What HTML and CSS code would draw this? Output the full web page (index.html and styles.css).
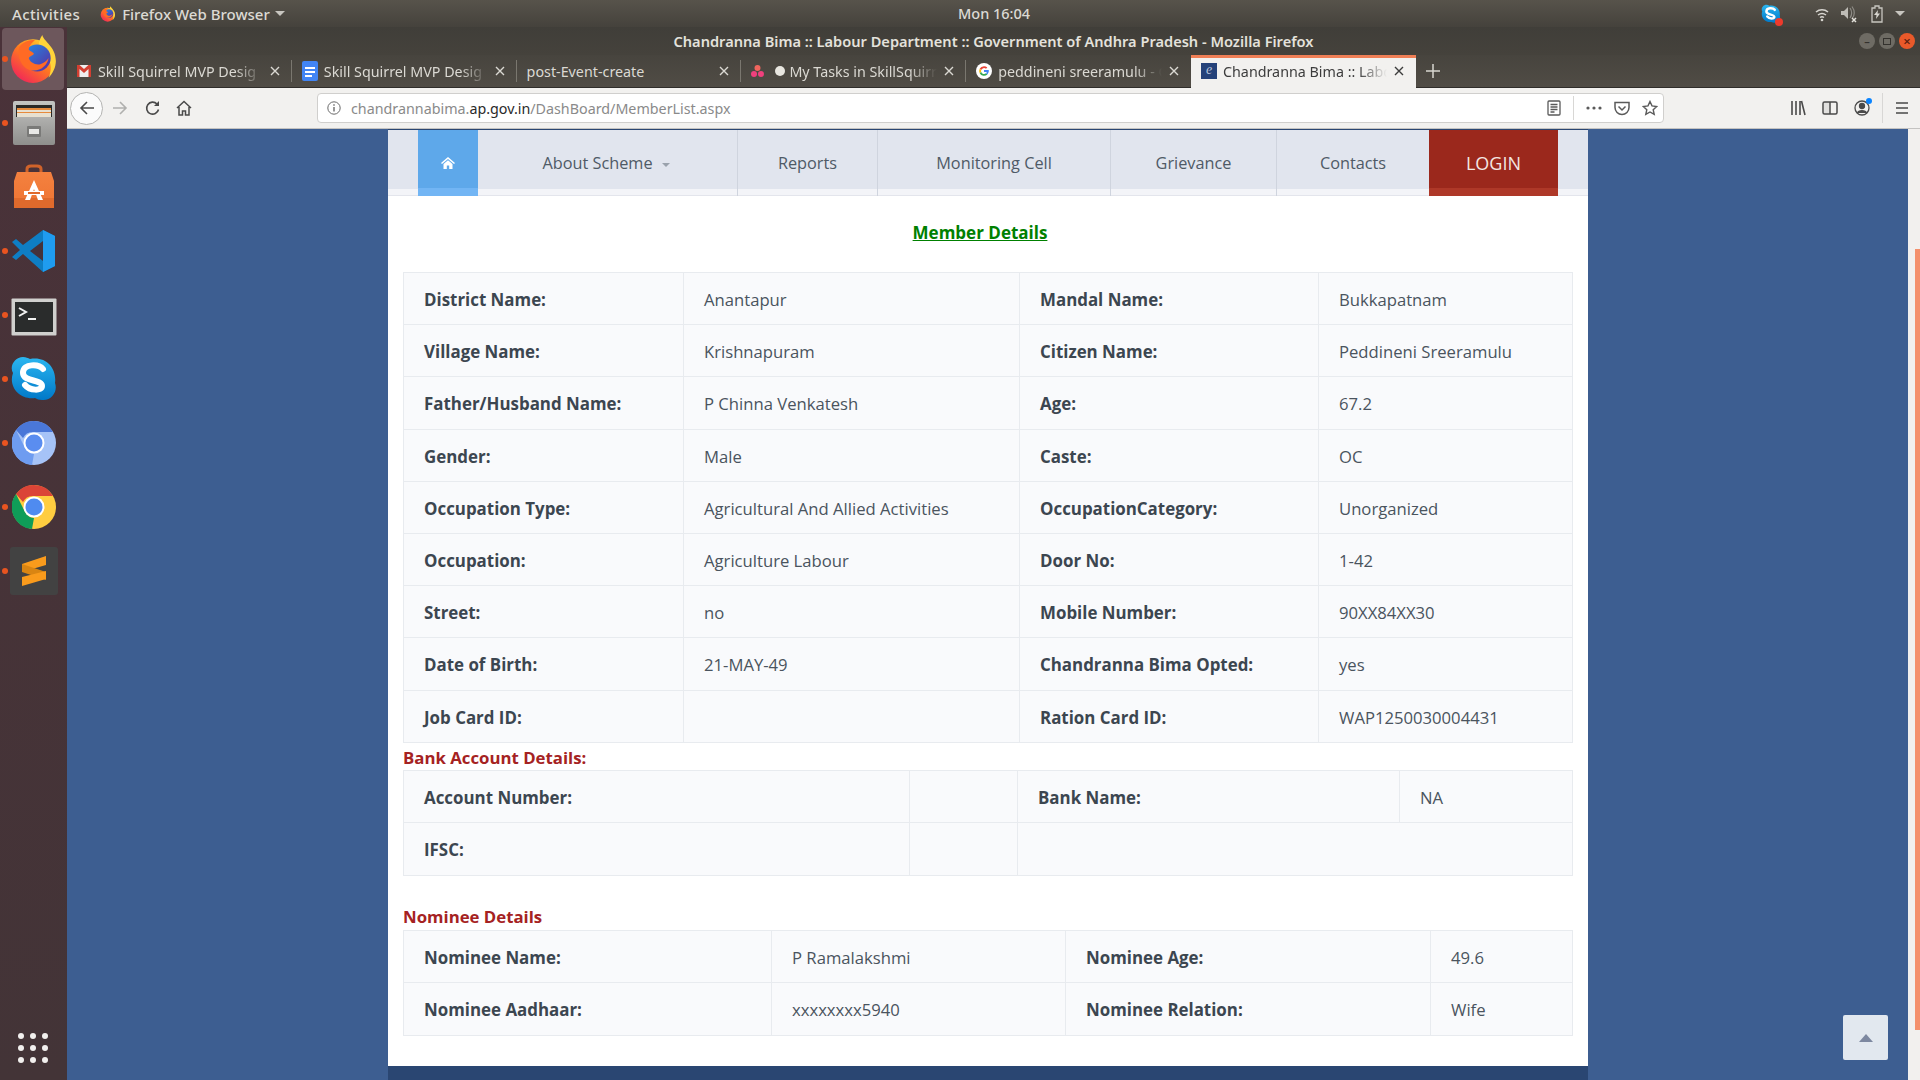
FILE: index.html
```html
<!DOCTYPE html>
<html lang="en">
<head>
    <meta charset="UTF-8">
    <title>Chandranna Bima :: Labour Department :: Government of Andhra Pradesh - Mozilla Firefox</title>
    <link rel="stylesheet" href="styles.css">
</head>
<body>
    <svg class="defs" width="0" height="0">
        <defs>
            <linearGradient id="ff-body" x1="0.8" y1="0.1" x2="0.2" y2="0.9">
                <stop offset="0" stop-color="#ffcb2e"/>
                <stop offset="0.45" stop-color="#ff7a1f"/>
                <stop offset="1" stop-color="#f22c55"/>
            </linearGradient>
            <linearGradient id="ff-ball" x1="0" y1="0" x2="1" y2="1">
                <stop offset="0" stop-color="#1f8ee6"/>
                <stop offset="1" stop-color="#5b2aa0"/>
            </linearGradient>
            <linearGradient id="skype-grad" x1="0" y1="0" x2="0" y2="1">
                <stop offset="0" stop-color="#2bb6f0"/>
                <stop offset="1" stop-color="#0078c8"/>
            </linearGradient>
            <linearGradient id="shop-grad" x1="0" y1="0" x2="0" y2="1">
                <stop offset="0" stop-color="#f4813f"/>
                <stop offset="1" stop-color="#ee7433"/>
            </linearGradient>
            <linearGradient id="drawer-grad" x1="0" y1="0" x2="0" y2="1">
                <stop offset="0" stop-color="#c4c4c2"/>
                <stop offset="1" stop-color="#8e8e8c"/>
            </linearGradient>
            <symbol id="firefox" viewBox="0 0 48 48">
                <circle cx="23" cy="26" r="21" fill="url(#ff-body)"/>
                <path d="M32 1c1 6 13 11 13 25 0 6-3 12-7 16 3-7 3-14-1-19-2-3-7-6-8-11-1-4 1-8 3-11z" fill="#ffd43a"/>
                <circle cx="27" cy="23" r="13" fill="url(#ff-ball)"/>
                <path d="M10 12c4-5 10-7 15-6-3 2-6 6-6 9 2 2 4 2 5 4-1 2-4 2-5 4 1 4 6 7 11 6 3-1 6-3 8-6-1 7-8 13-16 12C13 34 7 22 10 12z" fill="#ff6a24"/>
            </symbol>
            <symbol id="skype" viewBox="0 0 48 48">
                <path d="M13 2c3 0 5 1 7 2 16-3 27 9 25 24 3 8-3 18-13 17-3 0-5-1-7-2C10 45-2 32 3 18-1 11 5 2 13 2z" fill="url(#skype-grad)"/>
                <path d="M33 14c-4-5-20-6-20 4 0 9 19 6 19 13 0 5-12 5-17-1" fill="none" stroke="#fff" stroke-width="6" stroke-linecap="round"/>
            </symbol>
            <symbol id="close" viewBox="0 0 12 12">
                <path d="M2 2l8 8M10 2l-8 8" fill="none" stroke="currentColor" stroke-width="1.4"/>
            </symbol>
        </defs>
    </svg>

    <div class="topbar">
        <div class="topbar-left">
            <span class="activities">Activities</span>
            <svg class="topbar-ff" width="16" height="18"><use href="#firefox"/></svg>
            <span>Firefox Web Browser</span>
            <span class="caret"></span>
        </div>
        <div class="clock">Mon 16:04</div>
        <div class="tray">
            <span class="tray-skype">
                <svg width="20" height="22"><use href="#skype"/></svg>
                <span class="tray-badge"></span>
            </span>
            <svg class="tray-wifi" width="16" height="16" viewBox="0 0 16 16" fill="none" stroke="#d8d6d0" stroke-width="1.5">
                <path d="M2 6c3.5-3 8.5-3 12 0M4 9c2.5-2 5.5-2 8 0M6 11.5c1.2-.8 2.8-.8 4 0"/>
                <circle cx="8" cy="14" r="1.3" fill="#d8d6d0" stroke="none"/>
            </svg>
            <svg class="tray-vol" width="18" height="18" viewBox="0 0 18 18" fill="none">
                <path d="M1 6h3l4-4v12l-4-4H1z" fill="#bdbbb5"/>
                <path d="M10 3c2 3 2 7 0 10M12 1.5c3 4 3 9 0 12" stroke="#8e8c86" stroke-width="1.2"/>
                <path d="M12 13l4 4M16 13l-4 4" stroke="#e4e2dc" stroke-width="1.5"/>
            </svg>
            <svg class="tray-batt" width="12" height="18" viewBox="0 0 12 18">
                <path d="M4 1h4v2h3v14H1V3h3z" fill="none" stroke="#c8c6c0" stroke-width="1.3"/>
                <path d="M7 5L3 10h2.5L5 14l4-5.5H6.5z" fill="#d8d6d0"/>
            </svg>
            <span class="caret caret-tray"></span>
        </div>
    </div>

    <div class="desktop">
        <aside class="dock">
            <div class="dock-item dock-active has-dot">
                <svg width="50" height="50"><use href="#firefox"/></svg>
            </div>
            <div class="dock-item has-dot">
                <svg width="44" height="46" viewBox="0 0 44 46">
                    <rect x="1" y="1" width="42" height="44" rx="2" fill="url(#drawer-grad)"/>
                    <rect x="4" y="5" width="36" height="12" fill="#2a2826"/>
                    <rect x="5" y="8" width="34" height="9" fill="#e8e0d0"/>
                    <rect x="5" y="8" width="34" height="2" fill="#e78a3c"/>
                    <rect x="5" y="12" width="34" height="1" fill="#e78a3c"/>
                    <rect x="15" y="26" width="14" height="11" rx="1" fill="#7a7a78"/>
                    <rect x="17" y="29" width="10" height="5" fill="#e8e8e6"/>
                </svg>
            </div>
            <div class="dock-item">
                <svg width="44" height="46" viewBox="0 0 44 46">
                    <path d="M15 12V5c0-2 2-3 4-3h6c2 0 4 1 4 3v7" fill="none" stroke="#d0632a" stroke-width="3"/>
                    <path d="M5 8h34l3 9v27H2V17z" fill="url(#shop-grad)"/>
                    <rect x="2" y="34" width="40" height="10" fill="#e06a2c"/>
                    <path d="M22 16l9 20h-5l-4-11-4 11h-5z" fill="#fff"/>
                    <rect x="12" y="27" width="20" height="4" fill="#fff"/>
                    <rect x="16" y="28" width="12" height="2" fill="#e06a2c"/>
                </svg>
            </div>
            <div class="dock-item has-dot">
                <svg width="44" height="44" viewBox="0 0 44 44">
                    <path d="M31 1l12 6v30l-12 6-20-18-7 6-4-3 8-7-8-8 4-3 7 6z" fill="#0e7ec4"/>
                    <path d="M31 1l12 6v30l-12 6z" fill="#1f9cf0"/>
                    <path d="M31 12L18 22l13 10z" fill="#45323a"/>
                </svg>
            </div>
            <div class="dock-item has-dot">
                <svg class="dock-terminal" width="46" height="38" viewBox="0 0 46 38">
                    <rect x="0.5" y="0.5" width="45" height="37" rx="1" fill="#d0d0ce"/>
                    <rect x="4" y="4" width="38" height="30" fill="#2a2c2c"/>
                    <path d="M8 10l7 4-7 4" fill="none" stroke="#f2f2f2" stroke-width="2"/>
                    <rect x="17" y="20" width="8" height="2" fill="#f2f2f2"/>
                </svg>
            </div>
            <div class="dock-item has-dot">
                <svg width="48" height="48"><use href="#skype"/></svg>
            </div>
            <div class="dock-item has-dot">
                <svg width="44" height="44" viewBox="0 0 44 44">
                    <circle cx="22" cy="22" r="22" fill="#a6c3f7"/>
                    <path d="M22 0a22 22 0 0 1 19 11H22a11 11 0 0 0-11 6L4 9a22 22 0 0 1 18-9z" fill="#4a77d8"/>
                    <path d="M4 9l9 18a11 11 0 0 0 9 6l-2 11A22 22 0 0 1 4 9z" fill="#6e9cf0"/>
                    <circle cx="22" cy="22" r="10.5" fill="#fff"/>
                    <circle cx="22" cy="22" r="8.5" fill="#5a8df0"/>
                </svg>
            </div>
            <div class="dock-item has-dot">
                <svg width="44" height="44" viewBox="0 0 44 44">
                    <circle cx="22" cy="22" r="22" fill="#ffcd40"/>
                    <path d="M22 0a22 22 0 0 1 19 11H22a11 11 0 0 0-11 6L4 9a22 22 0 0 1 18-9z" fill="#db4437"/>
                    <path d="M4 9l9 18a11 11 0 0 0 9 6l-2 11A22 22 0 0 1 4 9z" fill="#0f9d58"/>
                    <circle cx="22" cy="22" r="10.5" fill="#fff"/>
                    <circle cx="22" cy="22" r="8.5" fill="#4f8bf0"/>
                </svg>
            </div>
            <div class="dock-item has-dot">
                <div class="sublime">
                    <svg width="26" height="32" viewBox="0 0 26 32">
                        <path d="M25 1v9L1 17V9z" fill="#f99b1c"/>
                        <path d="M1 9l24 8v8L1 17z" fill="#d98512"/>
                        <path d="M25 16v8L1 31v-9z" fill="#f99b1c"/>
                    </svg>
                </div>
            </div>
            <div class="app-grid">
                <i></i><i></i><i></i><i></i><i></i><i></i><i></i><i></i><i></i>
            </div>
        </aside>

        <div class="window">
            <div class="titlebar">
                <div class="title-text">Chandranna Bima :: Labour Department :: Government of Andhra Pradesh - Mozilla Firefox</div>
                <div class="win-buttons">
                    <span class="win-btn">&#8211;</span>
                    <span class="win-btn win-max"><i></i></span>
                    <span class="win-btn win-close">&#215;</span>
                </div>
            </div>

            <div class="tabstrip">
                <div class="tab">
                    <svg class="favicon" width="14" height="12" viewBox="0 0 14 12">
                        <rect width="14" height="12" fill="#eeeeee"/>
                        <path d="M0 0h2.5L7 4l4.5-4H14v12h-2.5V4L7 8 2.5 4v8H0z" fill="#d23f31"/>
                    </svg>
                    <span class="tab-title">Skill Squirrel MVP Desig</span>
                    <svg class="tab-close" width="12" height="12"><use href="#close"/></svg>
                </div>
                <div class="tab">
                    <svg class="favicon" width="16" height="20" viewBox="0 0 16 20">
                        <rect width="16" height="20" rx="2" fill="#4285f4"/>
                        <path d="M3 6h10v2H3zM3 10h10v2H3zM3 14h7v2H3z" fill="#fff"/>
                    </svg>
                    <span class="tab-title tab-title-wide">Skill Squirrel MVP Desig</span>
                    <svg class="tab-close" width="12" height="12"><use href="#close"/></svg>
                </div>
                <div class="tab">
                    <span class="tab-title tab-title-plain">post-Event-create</span>
                    <svg class="tab-close" width="12" height="12"><use href="#close"/></svg>
                </div>
                <div class="tab">
                    <svg class="favicon" width="13" height="12" viewBox="0 0 13 12">
                        <circle cx="6.5" cy="3" r="3" fill="#f0655d"/>
                        <circle cx="3" cy="9" r="3" fill="#f0407d"/>
                        <circle cx="10" cy="9" r="3" fill="#f0407d"/>
                    </svg>
                    <span class="unread-dot"></span>
                    <span class="tab-title tab-title-asana">My Tasks in SkillSquirr</span>
                    <svg class="tab-close" width="12" height="12"><use href="#close"/></svg>
                </div>
                <div class="tab">
                    <svg class="favicon" width="16" height="16" viewBox="0 0 16 16">
                        <circle cx="8" cy="8" r="8" fill="#fff"/>
                        <path d="M8 3.2a4.8 4.8 0 0 1 3.3 1.3L10 5.8A3 3 0 0 0 5.2 7L3.7 5.8A4.8 4.8 0 0 1 8 3.2z" fill="#ea4335"/>
                        <path d="M3.7 5.8L5.2 7a3 3 0 0 0 0 2l-1.5 1.2a4.8 4.8 0 0 1 0-4.4z" fill="#fbbc05"/>
                        <path d="M3.7 10.2L5.2 9A3 3 0 0 0 10 10.3l1.4 1.1A4.8 4.8 0 0 1 3.7 10.2z" fill="#34a853"/>
                        <path d="M12.8 7H8v2h2.8a2.5 2.5 0 0 1-.8 1.3l1.4 1.1A4.8 4.8 0 0 0 12.8 7z" fill="#4285f4"/>
                    </svg>
                    <span class="tab-title tab-title-wide">peddineni sreeramulu - G</span>
                    <svg class="tab-close" width="12" height="12"><use href="#close"/></svg>
                </div>
                <div class="tab tab-active">
                    <span class="site-icon">e</span>
                    <span class="tab-title tab-title-wide">Chandranna Bima :: Labo</span>
                    <svg class="tab-close" width="12" height="12"><use href="#close"/></svg>
                </div>
                <svg class="new-tab" width="14" height="14" viewBox="0 0 14 14">
                    <path d="M7 0v14M0 7h14" stroke="#d8d6d0" stroke-width="1.5"/>
                </svg>
            </div>

            <div class="toolbar">
                <div class="back-btn">
                    <svg width="16" height="16" viewBox="0 0 16 16" fill="none" stroke="#4a4a4a" stroke-width="1.6">
                        <path d="M15 8H2M8 2L2 8l6 6"/>
                    </svg>
                </div>
                <svg class="tool-forward" width="16" height="16" viewBox="0 0 16 16" fill="none" stroke="#b0b0ae" stroke-width="1.6">
                    <path d="M1 8h13M8 2l6 6-6 6"/>
                </svg>
                <svg class="tool-reload" width="16" height="16" viewBox="0 0 16 16" fill="none" stroke="#4a4a4a" stroke-width="1.6">
                    <path d="M13.5 9.5A6 6 0 1 1 12 4"/>
                    <path d="M14 1v5H9" fill="#4a4a4a" stroke="none"/>
                </svg>
                <svg class="tool-home" width="16" height="16" viewBox="0 0 16 16" fill="none" stroke="#4a4a4a" stroke-width="1.5">
                    <path d="M1 8l7-6.5L15 8M3 7v8h3.5v-4h3v4H13V7"/>
                </svg>
                <div class="urlbar">
                    <svg class="url-info" width="14" height="14" viewBox="0 0 14 14">
                        <circle cx="7" cy="7" r="6.2" fill="none" stroke="#6a6a6a"/>
                        <path d="M6.3 6h1.4v4.5H6.3zM6.3 3.2h1.4v1.5H6.3z" fill="#6a6a6a"/>
                    </svg>
                    <span class="url-text">chandrannabima.<b>ap.gov.in</b>/DashBoard/MemberList.aspx</span>
                    <svg class="url-reader" width="14" height="16" viewBox="0 0 14 16" fill="none" stroke="#5a5a5a" stroke-width="1.3">
                        <rect x="1" y="1" width="12" height="14" rx="1"/>
                        <path d="M3.5 4.5h7M3.5 7h7M3.5 9.5h7M3.5 12h4"/>
                    </svg>
                    <span class="url-sep"></span>
                    <svg class="url-dots" width="16" height="4" viewBox="0 0 16 4" fill="#5a5a5a">
                        <circle cx="2" cy="2" r="1.6"/><circle cx="8" cy="2" r="1.6"/><circle cx="14" cy="2" r="1.6"/>
                    </svg>
                    <svg class="url-pocket" width="16" height="15" viewBox="0 0 16 15" fill="none" stroke="#5a5a5a" stroke-width="1.5">
                        <path d="M1 1.5h14v5a7 7 0 0 1-14 0z"/>
                        <path d="M4.5 5.5L8 9l3.5-3.5"/>
                    </svg>
                    <svg class="url-star" width="16" height="16" viewBox="0 0 16 16" fill="none" stroke="#5a5a5a" stroke-width="1.4">
                        <path d="M8 1.5l2 4.4 4.7.6-3.5 3.2 1 4.7L8 12l-4.2 2.4 1-4.7L1.3 6.5 6 5.9z"/>
                    </svg>
                </div>
                <svg class="tool-library" width="16" height="16" viewBox="0 0 16 16" stroke="#4a4a4a" stroke-width="1.6" fill="none">
                    <path d="M2 1v14M6 1v14M10 1v14M11.5 1l3.5 14"/>
                </svg>
                <svg class="tool-sidebar" width="16" height="16" viewBox="0 0 16 16" fill="none" stroke="#4a4a4a" stroke-width="1.5">
                    <rect x="1" y="2" width="14" height="12" rx="1.5"/>
                    <path d="M8 2v12"/>
                    <path d="M2 2h6v12H2z" fill="#4a4a4a" stroke="none" opacity="0.1"/>
                </svg>
                <span class="tool-account">
                    <svg width="16" height="16" viewBox="0 0 16 16" fill="none" stroke="#4a4a4a" stroke-width="1.3">
                        <circle cx="8" cy="8" r="7"/>
                        <circle cx="8" cy="6" r="2.5" fill="#4a4a4a"/>
                        <path d="M3.5 13c1-3 8-3 9 0" fill="#4a4a4a"/>
                    </svg>
                    <span class="account-dot"></span>
                </span>
                <span class="tool-sep"></span>
                <svg class="tool-menu" width="14" height="14" viewBox="0 0 14 14" stroke="#4a4a4a" stroke-width="1.6">
                    <path d="M1 2h12M1 7h12M1 12h12"/>
                </svg>
            </div>

            <div class="viewport">
                <div class="page">
                    <div class="container">
                        <nav class="nav">
                            <a class="nav-item nav-home">
                                <svg width="14" height="12" viewBox="0 0 14 12" fill="#fff">
                                    <path d="M7 0l7 6-1 1-6-5-6 5-1-1zM2.5 7L7 3.2 11.5 7v5H8.2V8.500H5.800V12H2.500z"/>
                                </svg>
                            </a>
                            <a class="nav-item nav-about">About Scheme <span class="nav-caret"></span></a>
                            <a class="nav-item nav-reports">Reports</a>
                            <a class="nav-item nav-monitor">Monitoring Cell</a>
                            <a class="nav-item nav-grievance">Grievance</a>
                            <a class="nav-item nav-contacts">Contacts</a>
                            <a class="nav-item nav-login">LOGIN</a>
                        </nav>

                        <div class="content">
                            <h2 class="page-title">Member Details</h2>

                            <table class="details member-table">
                                <tr>
                                    <th>District Name:</th><td>Anantapur</td>
                                    <th>Mandal Name:</th><td>Bukkapatnam</td>
                                </tr>
                                <tr>
                                    <th>Village Name:</th><td>Krishnapuram</td>
                                    <th>Citizen Name:</th><td>Peddineni Sreeramulu</td>
                                </tr>
                                <tr>
                                    <th>Father/Husband Name:</th><td>P Chinna Venkatesh</td>
                                    <th>Age:</th><td>67.2</td>
                                </tr>
                                <tr>
                                    <th>Gender:</th><td>Male</td>
                                    <th>Caste:</th><td>OC</td>
                                </tr>
                                <tr>
                                    <th>Occupation Type:</th><td>Agricultural And Allied Activities</td>
                                    <th>OccupationCategory:</th><td>Unorganized</td>
                                </tr>
                                <tr>
                                    <th>Occupation:</th><td>Agriculture Labour</td>
                                    <th>Door No:</th><td>1-42</td>
                                </tr>
                                <tr>
                                    <th>Street:</th><td>no</td>
                                    <th>Mobile Number:</th><td>90XX84XX30</td>
                                </tr>
                                <tr>
                                    <th>Date of Birth:</th><td>21-MAY-49</td>
                                    <th>Chandranna Bima Opted:</th><td>yes</td>
                                </tr>
                                <tr>
                                    <th>Job Card ID:</th><td></td>
                                    <th>Ration Card ID:</th><td>WAP1250030004431</td>
                                </tr>
                            </table>

                            <h3 class="section-title">Bank Account Details:</h3>
                            <table class="details bank-table">
                                <tr>
                                    <th>Account Number:</th><td></td>
                                    <th>Bank Name:</th><td>NA</td>
                                </tr>
                                <tr>
                                    <th>IFSC:</th><td></td>
                                    <td colspan="2"></td>
                                </tr>
                            </table>

                            <h3 class="section-title nominee-title">Nominee Details</h3>
                            <table class="details nominee-table">
                                <tr>
                                    <th>Nominee Name:</th><td>P Ramalakshmi</td>
                                    <th>Nominee Age:</th><td>49.6</td>
                                </tr>
                                <tr>
                                    <th>Nominee Aadhaar:</th><td>xxxxxxxx5940</td>
                                    <th>Nominee Relation:</th><td>Wife</td>
                                </tr>
                            </table>
                        </div>
                        <div class="page-footer"></div>
                    </div>
                    <a class="to-top"><span></span></a>
                </div>
                <div class="scrollbar"><div class="scroll-thumb"></div></div>
            </div>
        </div>
    </div>
</body>
</html>
```

FILE: styles.css
```css
* {
    margin: 0;
    padding: 0;
    box-sizing: border-box;
}

html, body {
    width: 1920px;
    height: 1080px;
    overflow: hidden;
}

body {
    font-family: "Open Sans", "Noto Sans", sans-serif;
    background: #3d5e91;
    color: #3c4650;
    display: flex;
    flex-direction: column;
}

.defs {
    position: absolute;
}

/* ubuntu top panel */
.topbar {
    height: 27px;
    flex: none;
    display: flex;
    align-items: center;
    position: relative;
    background: linear-gradient(#57534b, #45423c);
    color: #dcdad4;
    font-family: "Noto Sans", sans-serif;
    font-size: 15px;
    font-weight: 500;
}

.topbar-left {
    display: flex;
    align-items: center;
    padding-left: 12px;
}

.activities {
    margin-right: 20px;
    letter-spacing: 0.35px;
}

.topbar-ff {
    margin-right: 6px;
}

.caret {
    width: 0;
    height: 0;
    margin-left: 5px;
    border-left: 5px solid transparent;
    border-right: 5px solid transparent;
    border-top: 5px solid #c8c6c0;
}

.clock {
    position: absolute;
    left: 958px;
    top: 3px;
    font-size: 14.5px;
}

.tray {
    margin-left: auto;
    display: flex;
    align-items: center;
    padding-right: 15px;
}

.tray-skype {
    position: relative;
    display: flex;
    margin-right: 33px;
}

.tray-badge {
    position: absolute;
    right: -2px;
    bottom: -1px;
    width: 8px;
    height: 8px;
    border-radius: 50%;
    background: #ee3a2c;
}

.tray-wifi {
    margin-right: 10px;
}

.tray-vol {
    margin-right: 13px;
}

.tray-batt {
    margin-right: 12px;
}

.caret-tray {
    margin-left: 0;
}

.desktop {
    flex: 1;
    display: flex;
    min-height: 0;
}

/* launcher */
.dock {
    width: 67px;
    flex: none;
    display: flex;
    flex-direction: column;
    background: linear-gradient(#4a3239, #433437);
}

.dock-item {
    height: 64px;
    flex: none;
    width: 67px;
    display: flex;
    align-items: center;
    justify-content: center;
    position: relative;
}

.dock-active::before {
    content: "";
    position: absolute;
    left: 2px;
    top: 1px;
    width: 62px;
    height: 62px;
    border-radius: 4px;
    background: #6d575c;
}

.dock-active svg {
    position: relative;
}

.dock-terminal {
    margin-top: 4px;
}

.has-dot::after {
    content: "";
    position: absolute;
    left: 2px;
    top: 29px;
    width: 6px;
    height: 6px;
    border-radius: 50%;
    background: #e95420;
}

.sublime {
    width: 48px;
    height: 48px;
    border-radius: 3px;
    background: #424242;
    display: flex;
    align-items: center;
    justify-content: center;
}

.app-grid {
    margin-top: auto;
    margin-bottom: 17px;
    margin-left: 18px;
    width: 30px;
    display: grid;
    grid-template-columns: repeat(3, 6px);
    gap: 6px;
}

.app-grid i {
    width: 6px;
    height: 6px;
    border-radius: 50%;
    background: #f2f0ee;
}

/* firefox window */
.window {
    flex: 1;
    min-width: 0;
    display: flex;
    flex-direction: column;
}

.titlebar {
    height: 28px;
    flex: none;
    position: relative;
    display: flex;
    align-items: center;
    justify-content: center;
    background: linear-gradient(#403e39, #45423c);
    color: #e4e2dc;
    font-family: "Noto Sans", sans-serif;
    font-size: 14.6px;
    font-weight: 600;
}

.win-buttons {
    position: absolute;
    right: 5px;
    top: 6px;
    display: flex;
    gap: 4px;
}

.win-btn {
    width: 16px;
    height: 16px;
    border-radius: 50%;
    background: #6e6b64;
    color: #33312d;
    font-size: 11px;
    line-height: 15px;
    text-align: center;
    display: flex;
    align-items: center;
    justify-content: center;
}

.win-max i {
    width: 8px;
    height: 7px;
    border: 1px solid #33312d;
}

.win-close {
    background: #e9592a;
    color: #5a2010;
    font-size: 13px;
}

.tabstrip {
    height: 33px;
    flex: none;
    display: flex;
    background: linear-gradient(#47443e, #504c45);
    border-bottom: 1px solid #2f2d2a;
    color: #dbd9d3;
    font-family: "Noto Sans", sans-serif;
    font-size: 14.3px;
    position: relative;
}

.tab {
    width: 224.8px;
    flex: none;
    padding: 0 11px 0 10px;
    display: flex;
    align-items: center;
    position: relative;
}

.tab::after {
    content: "";
    position: absolute;
    right: 0;
    top: 5px;
    bottom: 5px;
    width: 1px;
    background: #7a776f;
}

.tab:nth-child(5)::after,
.tab-active::after {
    display: none;
}

.tab-active {
    background: #f2f1ef;
    color: #3c3c3c;
    border-top: 3px solid #f07f56;
    padding-bottom: 4px;
    height: 33px;
}

.favicon {
    flex: none;
}

.tab-title {
    flex: 1;
    min-width: 0;
    margin-left: 7px;
    white-space: nowrap;
    overflow: hidden;
    -webkit-mask-image: linear-gradient(to right, #000 calc(100% - 28px), transparent);
    mask-image: linear-gradient(to right, #000 calc(100% - 28px), transparent);
}

.tab-title-wide {
    margin-left: 6px;
}

.tab-title-plain {
    margin-left: 0;
    -webkit-mask-image: none;
    mask-image: none;
}

.tab-close {
    flex: none;
    margin-left: 6px;
}

.unread-dot {
    flex: none;
    width: 10px;
    height: 10px;
    margin-left: 11px;
    border-radius: 50%;
    background: #e8e6e0;
}

.tab-title-asana {
    margin-left: 4px;
}

.site-icon {
    flex: none;
    width: 16px;
    height: 16px;
    background: #25427a;
    color: #b8c4dc;
    font-family: "Liberation Serif", serif;
    font-style: italic;
    font-size: 14px;
    line-height: 14px;
    text-align: center;
}

.new-tab {
    margin: 9px 0 0 10px;
    flex: none;
}

.toolbar {
    height: 41px;
    flex: none;
    display: flex;
    align-items: center;
    position: relative;
    background: #f2f1ef;
    border-bottom: 1px solid #c4c3c1;
    padding-left: 3px;
}

.back-btn {
    width: 33px;
    height: 33px;
    flex: none;
    border: 1px solid #b4b4b2;
    border-radius: 50%;
    background: #fbfbfb;
    display: flex;
    align-items: center;
    justify-content: center;
}

.tool-forward {
    margin-left: 9px;
}

.tool-reload {
    margin-left: 17px;
}

.tool-home {
    margin-left: 15px;
}

.urlbar {
    width: 1347px;
    height: 30px;
    margin-left: 125px;
    flex: none;
    display: flex;
    align-items: center;
    background: #fff;
    border: 1px solid #d0cfcd;
    border-radius: 4px;
    padding-left: 9px;
    font-family: "Noto Sans", sans-serif;
    font-size: 14.3px;
    color: #8a8a8a;
}

.url-text {
    margin-left: 10px;
}

.url-text b {
    font-weight: 400;
    color: #2a2a2a;
}

.url-reader {
    margin-left: auto;
}

.url-sep {
    width: 1px;
    height: 24px;
    margin: 0 12px 0 12px;
    background: #d8d7d5;
}

.url-dots {
    margin-right: 12px;
}

.url-pocket {
    margin-right: 12px;
}

.url-star {
    margin-right: 5px;
}

.tool-library {
    margin-left: 126px;
}

.tool-sidebar {
    margin-left: 16px;
}

.tool-account {
    margin-left: 16px;
    position: relative;
    display: flex;
}

.account-dot {
    position: absolute;
    right: -2px;
    top: -2px;
    width: 6px;
    height: 6px;
    border-radius: 50%;
    background: #0a84ff;
}

.tool-sep {
    width: 1px;
    height: 30px;
    margin-left: 12px;
    background: #d8d7d5;
}

.tool-menu {
    margin-left: 12px;
}

/* page in the browser */
.viewport {
    flex: 1;
    min-height: 0;
    display: flex;
}

.page {
    flex: 1;
    min-width: 0;
    background: #3d5e91;
    position: relative;
    overflow: hidden;
}

.scrollbar {
    width: 12px;
    flex: none;
    background: #f2f0ee;
    padding: 120px 0 50px 7px;
}

.scroll-thumb {
    height: 100%;
    background: #f4906c;
}

.container {
    width: 1200px;
    margin-left: 321px;
    background: #fff;
    height: 100%;
    display: flex;
    flex-direction: column;
}

.nav {
    height: 67px;
    flex: none;
    display: flex;
    padding-left: 30px;
    background: linear-gradient(#e1e5ee 59px, #f3f4f8 59px);
    border-top: 1px solid #2a4672;
    border-bottom: 1px solid #e3e5ec;
    font-size: 16.3px;
    color: #4f5a66;
}

.nav-item {
    height: 66px;
    display: flex;
    align-items: center;
    justify-content: center;
    border-right: 1px solid #cfd4de;
}

.nav-home {
    width: 60px;
    background: linear-gradient(#5ea8ea 58px, #72b5f4 58px);
    border-right: 0;
}

.nav-about {
    width: 260px;
    padding-right: 3px;
}

.nav-caret {
    width: 0;
    height: 0;
    margin-left: 9px;
    margin-top: 3px;
    border-left: 4px solid transparent;
    border-right: 4px solid transparent;
    border-top: 4px solid #9aa2ac;
}

.nav-reports {
    width: 140px;
}

.nav-monitor {
    width: 233px;
}

.nav-grievance {
    width: 166px;
}

.nav-contacts {
    width: 152px;
    border-right: 0;
}

.nav-login {
    width: 129px;
    color: #f4e6e2;
    font-size: 18px;
    background: linear-gradient(#9b281c 58px, #ae3828 58px);
    border-right: 0;
}

.content {
    flex: 1;
    padding: 0 15px;
}

.page-title {
    height: 76px;
    padding-top: 24px;
    margin-right: 16px;
    text-align: center;
    font-size: 17px;
    font-weight: 700;
    line-height: 26px;
    color: #008000;
    text-decoration: underline;
}

.details {
    width: 1170px;
    table-layout: fixed;
    border-collapse: collapse;
    background: #f9fafc;
    font-size: 16.67px;
}

.details th,
.details td {
    height: 52.2px;
    padding: 2px 20px 0;
    border: 1px solid #e8ebef;
    text-align: left;
    vertical-align: middle;
    white-space: nowrap;
}

.details th {
    font-size: 16.9px;
    font-weight: 700;
    color: #3c4650;
}

.details td {
    font-weight: 400;
    color: #4a545e;
}

.bank-table th,
.bank-table td,
.nominee-table th,
.nominee-table td {
    height: 52.5px;
}

.member-table th:nth-child(1) { width: 280px; }
.member-table td:nth-child(2) { width: 336px; }
.member-table th:nth-child(3) { width: 299px; }

.bank-table th:nth-child(1) { width: 506px; }
.bank-table td:nth-child(2) { width: 108px; }
.bank-table th:nth-child(3) { width: 382px; }

.nominee-table th:nth-child(1) { width: 368px; }
.nominee-table td:nth-child(2) { width: 294px; }
.nominee-table th:nth-child(3) { width: 365px; }

.section-title {
    height: 27px;
    font-size: 16.8px;
    font-weight: 700;
    line-height: 29px;
    color: #a52222;
}

.nominee-title {
    height: 54px;
    padding-top: 26px;
}

.page-footer {
    height: 14px;
    flex: none;
    background: #2a4672;
}

.to-top {
    position: absolute;
    right: 20px;
    bottom: 20px;
    width: 45px;
    height: 45px;
    border-radius: 2px;
    background: #e2e8ef;
    display: flex;
    align-items: center;
    justify-content: center;
}

.to-top span {
    width: 0;
    height: 0;
    border-left: 7px solid transparent;
    border-right: 7px solid transparent;
    border-bottom: 8px solid #7d88a0;
}
```
